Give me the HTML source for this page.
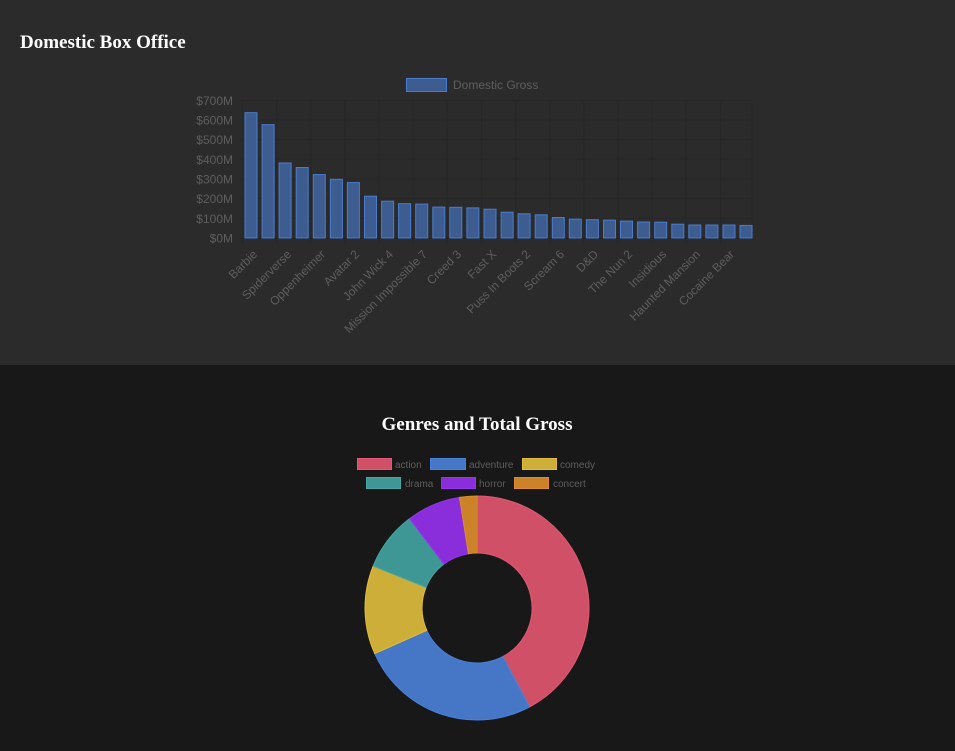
<!DOCTYPE html>
<html><head><meta charset="utf-8"><style>
html,body{margin:0;padding:0;width:955px;height:751px;overflow:hidden;background:#181818}
svg{display:block}
</style></head><body>
<svg width="955" height="751" xmlns="http://www.w3.org/2000/svg" font-family="Liberation Sans, sans-serif">
<rect x="0" y="0" width="955" height="365" fill="#2b2b2b"/>
<rect x="0" y="365" width="955" height="386" fill="#181818"/>
<text x="20" y="48" font-family="Liberation Serif, serif" font-weight="bold" font-size="19" fill="#fff">Domestic Box Office</text>

<rect x="406.5" y="78.5" width="40" height="13" fill="#3d5c90" stroke="#4a7cd0" stroke-width="1"/>
<text x="453" y="89" font-size="12" fill="#5e5e5e">Domestic Gross</text>

<g stroke="#272727" stroke-width="1">
<line x1="240" y1="100.5" x2="752" y2="100.5"/><line x1="240" y1="120" x2="752" y2="120"/>
<line x1="240" y1="139.5" x2="752" y2="139.5"/><line x1="240" y1="159" x2="752" y2="159"/>
<line x1="240" y1="179" x2="752" y2="179"/><line x1="240" y1="198.5" x2="752" y2="198.5"/>
<line x1="240" y1="218.5" x2="752" y2="218.5"/>
<line x1="242.5" y1="100" x2="242.5" y2="244"/><line x1="276.6" y1="100" x2="276.6" y2="244"/><line x1="310.8" y1="100" x2="310.8" y2="244"/><line x1="344.9" y1="100" x2="344.9" y2="244"/><line x1="379.1" y1="100" x2="379.1" y2="244"/><line x1="413.2" y1="100" x2="413.2" y2="244"/><line x1="447.3" y1="100" x2="447.3" y2="244"/><line x1="481.5" y1="100" x2="481.5" y2="244"/><line x1="515.6" y1="100" x2="515.6" y2="244"/><line x1="549.8" y1="100" x2="549.8" y2="244"/><line x1="583.9" y1="100" x2="583.9" y2="244"/><line x1="618" y1="100" x2="618" y2="244"/><line x1="652.2" y1="100" x2="652.2" y2="244"/><line x1="686.3" y1="100" x2="686.3" y2="244"/><line x1="720.5" y1="100" x2="720.5" y2="244"/><line x1="752" y1="100" x2="752" y2="244"/>
</g>
<line x1="240" y1="238.5" x2="752" y2="238.5" stroke="#222" stroke-width="1"/>
<g font-size="12" fill="#5e5e5e" text-anchor="end">
<text x="233" y="105">$700M</text><text x="233" y="124.5">$600M</text><text x="233" y="144">$500M</text><text x="233" y="164">$400M</text><text x="233" y="183.5">$300M</text><text x="233" y="203">$200M</text><text x="233" y="223">$100M</text><text x="233" y="242.5">$0M</text>
</g>
<g fill="#3d5c90" stroke="#4a7cd0" stroke-width="1">
<rect x="245" y="112.7" width="12" height="125.3"/>
<rect x="262.1" y="124.7" width="12" height="113.3"/>
<rect x="279.1" y="163" width="12" height="75"/>
<rect x="296.2" y="167.5" width="12" height="70.5"/>
<rect x="313.3" y="174.6" width="12" height="63.4"/>
<rect x="330.4" y="179.3" width="12" height="58.7"/>
<rect x="347.4" y="182.6" width="12" height="55.4"/>
<rect x="364.5" y="196.2" width="12" height="41.8"/>
<rect x="381.6" y="201.2" width="12" height="36.8"/>
<rect x="398.6" y="203.7" width="12" height="34.3"/>
<rect x="415.7" y="204.1" width="12" height="33.9"/>
<rect x="432.8" y="207.1" width="12" height="30.9"/>
<rect x="449.8" y="207.3" width="12" height="30.7"/>
<rect x="466.9" y="207.9" width="12" height="30.1"/>
<rect x="484" y="209.2" width="12" height="28.8"/>
<rect x="501.1" y="212.2" width="12" height="25.8"/>
<rect x="518.1" y="213.8" width="12" height="24.2"/>
<rect x="535.2" y="214.8" width="12" height="23.2"/>
<rect x="552.3" y="217.5" width="12" height="20.5"/>
<rect x="569.3" y="219.1" width="12" height="18.9"/>
<rect x="586.4" y="219.7" width="12" height="18.3"/>
<rect x="603.5" y="220.1" width="12" height="17.9"/>
<rect x="620.5" y="221.1" width="12" height="16.9"/>
<rect x="637.6" y="222" width="12" height="16"/>
<rect x="654.7" y="222.2" width="12" height="15.8"/>
<rect x="671.8" y="224.2" width="12" height="13.8"/>
<rect x="688.8" y="225" width="12" height="13"/>
<rect x="705.9" y="225" width="12" height="13"/>
<rect x="723" y="225" width="12" height="13"/>
<rect x="740" y="225.4" width="12" height="12.6"/>
</g>
<g font-size="12" fill="#5e5e5e" text-anchor="end">
<text transform="translate(258,255) rotate(-45)">Barbie</text>
<text transform="translate(292,255) rotate(-45)">Spiderverse</text>
<text transform="translate(326,255) rotate(-45)">Oppenheimer</text>
<text transform="translate(360,255) rotate(-45)">Avatar 2</text>
<text transform="translate(394,255) rotate(-45)">John Wick 4</text>
<text transform="translate(428,255) rotate(-45)">Mission Impossible 7</text>
<text transform="translate(462,255) rotate(-45)">Creed 3</text>
<text transform="translate(497,255) rotate(-45)">Fast X</text>
<text transform="translate(531,255) rotate(-45)">Puss In Boots 2</text>
<text transform="translate(565,255) rotate(-45)">Scream 6</text>
<text transform="translate(599,255) rotate(-45)">D&amp;D</text>
<text transform="translate(633,255) rotate(-45)">The Nun 2</text>
<text transform="translate(667,255) rotate(-45)">Insidious</text>
<text transform="translate(701,255) rotate(-45)">Haunted Mansion</text>
<text transform="translate(735,255) rotate(-45)">Cocaine Bear</text>
</g>

<text x="477" y="430" text-anchor="middle" font-family="Liberation Serif, serif" font-weight="bold" font-size="19" fill="#fff">Genres and Total Gross</text>

<g font-size="10" fill="#5e5e5e">
<rect x="357.5" y="458.5" width="34" height="11" fill="#d05068" stroke="#e05a75"/><text x="395" y="468">action</text>
<rect x="430.5" y="458.5" width="35" height="11" fill="#4577c6" stroke="#4a80d8"/><text x="469" y="468">adventure</text>
<rect x="522.5" y="458.5" width="34" height="11" fill="#cdae38" stroke="#e0bc3a"/><text x="560" y="468">comedy</text>
<rect x="366.5" y="477.5" width="34" height="11" fill="#3e9795" stroke="#45a5a3"/><text x="405" y="487">drama</text>
<rect x="441.5" y="477.5" width="34" height="11" fill="#8a2ddb" stroke="#9535ee"/><text x="479" y="487">horror</text>
<rect x="514.5" y="477.5" width="34" height="11" fill="#cc8228" stroke="#dd8c2c"/><text x="553" y="487">concert</text>
</g>

<g stroke-width="1">
<path d="M477,496 A112,112 0 0 1 529.6,706.9 L502.8,656.6 A55,55 0 0 0 477,553 Z" fill="#d05068" stroke="#e05a75"/>
<path d="M529.6,706.9 A112,112 0 0 1 374.7,653.6 L426.8,630.4 A55,55 0 0 0 502.8,656.6 Z" fill="#4577c6" stroke="#4a80d8"/>
<path d="M374.7,653.6 A112,112 0 0 1 373.2,566 L426,587.4 A55,55 0 0 0 426.8,630.4 Z" fill="#cdae38" stroke="#e0bc3a"/>
<path d="M373.2,566 A112,112 0 0 1 409.6,518.6 L443.9,564.1 A55,55 0 0 0 426,587.4 Z" fill="#3e9795" stroke="#45a5a3"/>
<path d="M409.6,518.6 A112,112 0 0 1 459.5,497.4 L468.4,553.7 A55,55 0 0 0 443.9,564.1 Z" fill="#8a2ddb" stroke="#9535ee"/>
<path d="M459.5,497.4 A112,112 0 0 1 477,496 L477,553 A55,55 0 0 0 468.4,553.7 Z" fill="#cc8228" stroke="#dd8c2c"/>
</g>
</svg>
</body></html>
